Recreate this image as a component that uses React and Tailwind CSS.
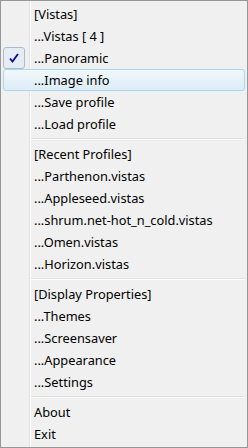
import React from 'react';

const groups = [
    ['[Vistas]', '...Vistas [ 4 ]', '...Panoramic', '...Image info', '...Save profile', '...Load profile'],
    ['[Recent Profiles]', '...Parthenon.vistas', '...Appleseed.vistas', '...shrum.net-hot_n_cold.vistas', '...Omen.vistas', '...Horizon.vistas'],
    ['[Display Properties]', '...Themes', '...Screensaver', '...Appearance', '...Settings'],
    ['About', 'Exit'],
];

const Item = ({ label }) => {
    const checked = label === '...Panoramic';
    const hover = label === '...Image info';
    return (
        <div className={`h-[22px] mx-[2px] flex items-center rounded-[3px] border ${hover ? 'border-[#a8d8eb] bg-gradient-to-b from-[#f1f8fb] to-[#dcecf7]' : 'border-transparent'}`}>
            <div className="w-[30px] h-full flex items-center">
                {checked && (
                    <div className="w-[22px] h-[22px] -ml-px rounded-[3px] border border-[#aeb9c9] bg-[#e6ecf3] flex items-center justify-center">
                        <svg width="12" height="12" viewBox="0 0 12 12">
                            <path d="M2 6.5 L4.5 9.5 L10 2" fill="none" stroke="#0c1290" strokeWidth="1.9" />
                        </svg>
                    </div>
                )}
            </div>
            <span className="text-[12.8px] text-black leading-none">{label}</span>
        </div>
    );
};

const Separator = () => (
    <div className="h-[8px] flex flex-col justify-center pl-[30px] pr-[2px]">
        <div className="h-px bg-[#e0e0e0]" />
        <div className="h-px bg-white" />
    </div>
);

export default function App() {
    return (
        <div
            className="w-[248px] h-[448px] border border-[#979797] pt-[2px] bg-[#f0f0f0] bg-[linear-gradient(to_right,transparent_28px,#e2e3e3_28px,#e2e3e3_29px,#ffffff_29px,#ffffff_30px,transparent_30px)]"
            style={{ fontFamily: '"Segoe UI", "Noto Sans", sans-serif' }}
        >
            {groups.map((g, i) => (
                <div key={i}>
                    {i > 0 && <Separator />}
                    {g.map(label => <Item key={label} label={label} />)}
                </div>
            ))}
        </div>
    );
}
